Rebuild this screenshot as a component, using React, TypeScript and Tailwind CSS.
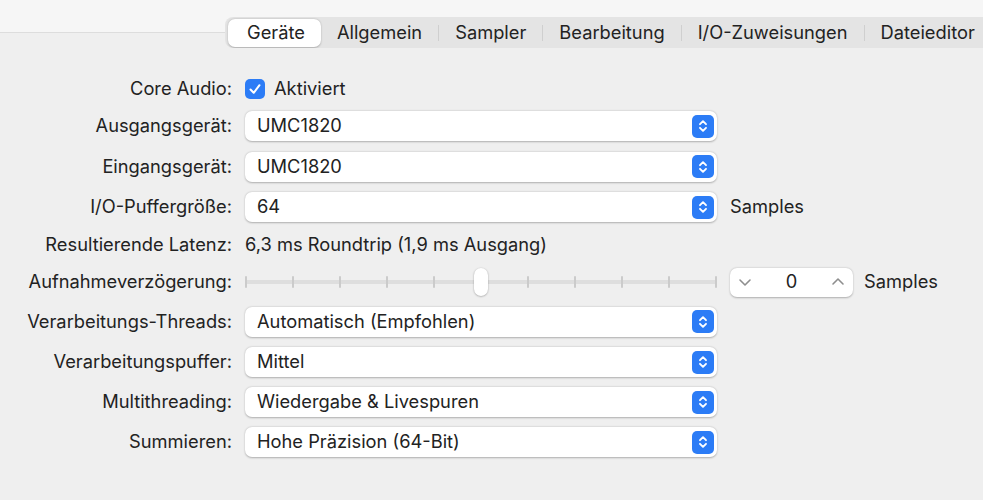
import React from 'react'

const tabs = ['Geräte', 'Allgemein', 'Sampler', 'Bearbeitung', 'I/O-Zuweisungen', 'Dateieditor']

function Chevrons() {
  return (
    <span className="flex h-[23px] w-[22px] items-center justify-center rounded-[5px] bg-[#2c7cf6]">
      <svg width="10" height="16" viewBox="0 0 10 16">
        <path
          d="M2 6.2 L5 3.2 L8 6.2 M2 9.8 L5 12.8 L8 9.8"
          stroke="white"
          strokeWidth="1.9"
          fill="none"
          strokeLinecap="round"
          strokeLinejoin="round"
        />
      </svg>
    </span>
  )
}

function Popup({ value }: { value: string }) {
  return (
    <div className="flex h-[30px] w-[472px] shrink-0 items-center justify-between rounded-[7px] bg-white pl-3 pr-[3px] shadow-[0_0.5px_2px_rgba(0,0,0,0.28)]">
      <span>{value}</span>
      <Chevrons />
    </div>
  )
}

function Row({ label, h = 'h-[40px]', children }: { label: string; h?: string; children: React.ReactNode }) {
  return (
    <div className={`flex items-center ${h}`}>
      <div className="w-[233px] shrink-0 whitespace-nowrap pr-[1px] text-right">{label}</div>
      <div className="ml-[12px] flex items-center gap-[13px] whitespace-nowrap">{children}</div>
    </div>
  )
}

function Slider() {
  const ticks = Array.from({ length: 11 })
  return (
    <div className="relative flex h-[30px] w-[472px] shrink-0 items-center">
      <div className="flex h-[4px] w-full items-center justify-between rounded-full bg-[#dedede]">
        {ticks.map((_, i) => (
          <div key={i} className="h-[12px] w-[2px] rounded-full bg-[#cbcbcb]" />
        ))}
      </div>
      {/* thumb */}
      <div className="absolute left-[229px] top-[1px] h-[28px] w-[14px] rounded-full bg-white shadow-[0_0.5px_2px_rgba(0,0,0,0.35)]" />
    </div>
  )
}

function Stepper() {
  return (
    <div className="flex h-[29px] w-[123px] shrink-0 items-center justify-between rounded-[7px] bg-white px-[8px] shadow-[0_0.5px_2px_rgba(0,0,0,0.28)]">
      <svg width="14" height="10" viewBox="0 0 14 10">
        <path d="M2 3 L7 8 L12 3" stroke="#8e8e8e" strokeWidth="1.6" fill="none" strokeLinecap="round" strokeLinejoin="round" />
      </svg>
      <span>0</span>
      <svg width="14" height="10" viewBox="0 0 14 10">
        <path d="M2 7 L7 2 L12 7" stroke="#8e8e8e" strokeWidth="1.6" fill="none" strokeLinecap="round" strokeLinejoin="round" />
      </svg>
    </div>
  )
}

export default function App() {
  return (
    <div className="h-[500px] w-[983px] overflow-hidden bg-[linear-gradient(#f6f6f6_0_32px,#dddddd_32px_33px,#efefef_33px)] font-[Inter,'Noto_Sans',sans-serif] text-[18.3px] text-[#222222]">
      {/* Tab bar */}
      <div className="flex pt-[17px] pl-[225px]">
        <div className="flex h-[31px] min-w-0 flex-1 items-center overflow-hidden whitespace-nowrap rounded-l-[8px] bg-[#e4e4e4] pl-[3px]">
          {tabs.map((t, i) => (
            <React.Fragment key={t}>
              {i > 1 && <div className="h-[16px] w-[1px] shrink-0 bg-[#cfcfcf]" />}
              <div
                className={
                  i === 0
                    ? 'flex h-[28px] shrink-0 items-center rounded-[7px] bg-white pl-[19px] pr-[16px] shadow-[0_0.5px_2px_rgba(0,0,0,0.25)]'
                    : 'flex h-[28px] shrink-0 items-center px-[16px]'
                }
              >
                {t}
              </div>
            </React.Fragment>
          ))}
        </div>
      </div>

      {/* Form */}
      <div className="flex flex-col pt-[24px]">
        <Row label="Core Audio:" h="h-[34px]">
          <div className="flex items-center gap-[9px]">
            <span className="flex h-[20px] w-[20px] items-center justify-center rounded-[5px] bg-[#2c7cf6]">
              <svg width="14" height="14" viewBox="0 0 14 14">
                <path d="M2.5 7.5 L5.7 10.8 L11.5 3.2" stroke="white" strokeWidth="2" fill="none" strokeLinecap="round" strokeLinejoin="round" />
              </svg>
            </span>
            <span>Aktiviert</span>
          </div>
        </Row>
        <Row label="Ausgangsgerät:">
          <Popup value="UMC1820" />
        </Row>
        <Row label="Eingangsgerät:" h="h-[41px]">
          <Popup value="UMC1820" />
        </Row>
        <Row label="I/O-Puffergröße:">
          <Popup value="64" />
          <span>Samples</span>
        </Row>
        <Row label="Resultierende Latenz:" h="h-[36px]">
          <span>6,3 ms Roundtrip (1,9 ms Ausgang)</span>
        </Row>
        <Row label="Aufnahmeverzögerung:" h="h-[38px]">
          <Slider />
          <Stepper />
          <span className="-ml-[2px]">Samples</span>
        </Row>
        <Row label="Verarbeitungs-Threads:" h="h-[41px]">
          <Popup value="Automatisch (Empfohlen)" />
        </Row>
        <Row label="Verarbeitungspuffer:">
          <Popup value="Mittel" />
        </Row>
        <Row label="Multithreading:">
          <Popup value="Wiedergabe & Livespuren" />
        </Row>
        <Row label="Summieren:">
          <Popup value="Hohe Präzision (64-Bit)" />
        </Row>
      </div>
    </div>
  )
}
